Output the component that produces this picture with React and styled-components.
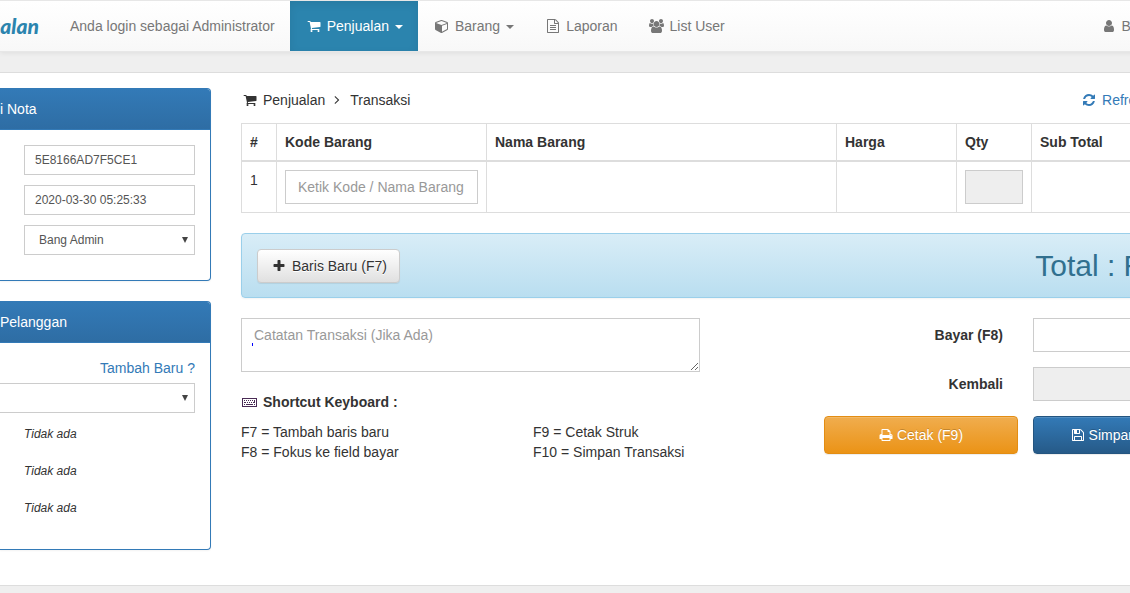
import styled, { createGlobalStyle, css } from "styled-components";

const icons = {
    cart: "M704 1536q0 52-38 90t-90 38-90-38-38-90 38-90 90-38 90 38 38 90zm896 0q0 52-38 90t-90 38-90-38-38-90 38-90 90-38 90 38 38 90zm128-1088v512q0 24-16.5 42.5t-40.5 21.5l-1044 122q13 60 13 70 0 16-24 64h920q26 0 45 19t19 45-19 45-45 19h-1024q-26 0-45-19t-19-45q0-11 8-31.5t16-36 21.5-40 15.5-29.5l-177-823h-204q-26 0-45-19t-19-45 19-45 45-19h256q16 0 28.5 6.5t19.5 15.5 13 24.5 8 26 5.5 29.5 4.5 26h1201q26 0 45 19t19 45z",
    cube: "M896 1629l640-349v-636l-640 233v752zm-64-865l698-254-698-254-698 254zm832-252v768q0 35-18 65t-49 47l-704 384q-28 16-61 16t-61-16l-704-384q-31-17-49-47t-18-65v-768q0-40 23-73t61-47l704-256q22-8 44-8t44 8l704 256q38 14 61 47t23 73z",
    file: "M1596 380q28 28 48 76t20 88v1152q0 40-28 68t-68 28h-1344q-40 0-68-28t-28-68v-1600q0-40 28-68t68-28h896q40 0 88 20t76 48zm-444-244v376h376q-10-29-22-41l-313-313q-12-12-41-22zm384 1528v-1024h-416q-40 0-68-28t-28-68v-416h-768v1536h1280zm-1024-864q0-14 9-23t23-9h704q14 0 23 9t9 23v64q0 14-9 23t-23 9h-704q-14 0-23-9t-9-23v-64zm736 224q14 0 23 9t9 23v64q0 14-9 23t-23 9h-704q-14 0-23-9t-9-23v-64q0-14 9-23t23-9h704zm0 256q14 0 23 9t9 23v64q0 14-9 23t-23 9h-704q-14 0-23-9t-9-23v-64q0-14 9-23t23-9h704z",
    users: "M593 896q-162 5-265 128h-134q-82 0-138-40.5t-56-118.5q0-353 124-353 6 0 43.5 21t97.5 42.5 119 21.5q67 0 133-23-5 37-5 66 0 139 81 256zm1071 637q0 120-73 189.5t-194 69.5h-874q-121 0-194-69.5t-73-189.5q0-53 3.5-103.5t14-109 26.5-108.5 43-97.5 62-81 85.5-53.5 111.5-20q10 0 43 21.5t73 48 107 48 135 21.5 135-21.5 107-48 73-48 43-21.5q61 0 111.5 20t85.5 53.5 62 81 43 97.5 26.5 108.5 14 109 3.5 103.5zm-1024-1277q0 106-75 181t-181 75-181-75-75-181 75-181 181-75 181 75 75 181zm704 384q0 159-112.5 271.5t-271.5 112.5-271.5-112.5-112.5-271.5 112.5-271.5 271.5-112.5 271.5 112.5 112.5 271.5zm576 225q0 78-56 118.5t-138 40.5h-134q-103-123-265-128 81-117 81-256 0-29-5-66 66 23 133 23 59 0 119-21.5t97.5-42.5 43.5-21q124 0 124 353zm-128-609q0 106-75 181t-181 75-181-75-75-181 75-181 181-75 181 75 75 181z",
    user: "M1536 1399q0 109-62.5 187t-150.5 78h-854q-88 0-150.5-78t-62.5-187q0-85 8.5-160.5t31.5-152 58.5-131 94-89 134.5-34.5q131 128 313 128t313-128q76 0 134.5 34.5t94 89 58.5 131 31.5 152 8.5 160.5zm-256-887q0 159-112.5 271.5t-271.5 112.5-271.5-112.5-112.5-271.5 112.5-271.5 271.5-112.5 271.5 112.5 112.5 271.5z",
    refresh: "M1639 1056q0 5-1 7-64 268-268 434.5t-478 166.5q-146 0-282.5-55t-243.5-157l-129 129q-19 19-45 19t-45-19-19-45v-448q0-26 19-45t45-19h448q26 0 45 19t19 45-19 45l-137 137q71 66 161 102t187 36q134 0 250-65t186-179q11-17 53-117 8-23 30-23h192q13 0 22.5 9.5t9.5 22.5zm25-800v448q0 26-19 45t-45 19h-448q-26 0-45-19t-19-45 19-45l138-138q-148-137-349-137-134 0-250 65t-186 179q-11 17-53 117-8 23-30 23h-199q-13 0-22.5-9.5t-9.5-22.5v-7q65-268 270-434.5t480-166.5q146 0 284 55.5t245 156.5l130-129q19-19 45-19t45 19 19 45z",
    angle: "M1171 896q0 13-10 23l-466 466q-10 10-23 10t-23-10l-50-50q-10-10-10-23t10-23l393-393-393-393q-10-10-10-23t10-23l50-50q10-10 23-10t23 10l466 466q10 10 10 23z",
    plus: "M1600 736v192q0 40-28 68t-68 28h-416v416q0 40-28 68t-68 28h-192q-40 0-68-28t-28-68v-416h-416q-40 0-68-28t-28-68v-192q0-40 28-68t68-28h416v-416q0-40 28-68t68-28h192q40 0 68 28t28 68v416h416q40 0 68 28t28 68z",
    print: "M448 1536h896v-256h-896v256zm0-640h896v-384h-160q-40 0-68-28t-28-68v-160h-640v640zm1152 64q0-26-19-45t-45-19-45 19-19 45 19 45 45 19 45-19 19-45zm128 0v416q0 13-9.5 22.5t-22.5 9.5h-224v160q0 40-28 68t-68 28h-960q-40 0-68-28t-28-68v-160h-224q-13 0-22.5-9.5t-9.5-22.5v-416q0-79 56.5-135.5t135.5-56.5h64v-544q0-40 28-68t68-28h672q40 0 88 20t76 48l152 152q28 28 48 76t20 88v256h64q79 0 135.5 56.5t56.5 135.5z",
    save: "M512 1536h768v-384h-768v384zm896 0h128v-896q0-14-10-38.5t-20-34.5l-281-281q-10-10-34-20t-39-10v416q0 40-28 68t-68 28h-576q-40 0-68-28t-28-68v-416h-128v1280h128v-416q0-40 28-68t68-28h832q40 0 68 28t28 68v416zm-384-928v-320q0-13-9.5-22.5t-22.5-9.5h-192q-13 0-22.5 9.5t-9.5 22.5v320q0 13 9.5 22.5t22.5 9.5h192q13 0 22.5-9.5t9.5-22.5zm640 32v928q0 40-28 68t-68 28h-1344q-40 0-68-28t-28-68v-1344q0-40 28-68t68-28h928q40 0 88 20t76 48l280 280q28 28 48 76t20 88z",
};

function Icon({name, fixed, width = 1792}){
    return(
        <IconBox $fixed={fixed}>
            <svg width={Math.round(width / 128)} height="14" viewBox={`0 0 ${width} 1792`} fill="currentColor" aria-hidden="true">
                <path d={icons[name]}/>
            </svg>
        </IconBox>
    )
}

function KeyboardIcon(){
    return(
        <IconBox $fixed>
            <svg width="18" height="14" viewBox="0 0 18 14" fill="#4a2b55" aria-hidden="true">
                <path fillRule="evenodd" d="M1 3h15v9H1zM2 4v7h13V4z"/>
                <path d="M3 5h1v1H3zM5 5h1v1H5zM7 5h1v1H7zM9 5h1v1H9zM11 5h1v1h-1zM13 5h1v3h-2V7h1zM3 7h2v1H3zM6 7h1v1H6zM8 7h1v1H8zM10 7h1v1h-1zM3 9h1v1H3zM5 9h7v1H5zM13 9h1v1h-1z"/>
            </svg>
        </IconBox>
    )
}

function Dropdown({label, children, padded, open}){
    return(
        <SelectWrap>
            <Select aria-label={label} $padded={padded} $open={open}>{children}</Select>
            <Arrow width="6" height="6" viewBox="0 0 6 6" aria-hidden="true"><path d="M0 0h6L3 6z" fill="#444"/></Arrow>
        </SelectWrap>
    )
}

function Header(){
    return(
        <Navbar>
            <Brand href="#">ualan</Brand>
            <NavText>Anda login sebagai Administrator</NavText>
            <NavLink href="#" $active><Icon name="cart" fixed/>Penjualan<Caret/></NavLink>
            <NavLink href="#"><Icon name="cube" width={1664} fixed/>Barang<Caret/></NavLink>
            <NavLink href="#"><Icon name="file" fixed/>Laporan</NavLink>
            <NavLink href="#"><Icon name="users" width={1920} fixed/>List User</NavLink>
            <NavLink href="#" $right><Icon name="user" fixed/>Bang Admin<Caret/></NavLink>
        </Navbar>
    )
}

function Sidebar(){
    return(
        <Side>
            <Panel>
                <PanelHeading>i Nota</PanelHeading>
                <NotaBody>
                    <SmallInput aria-label="No. Nota" defaultValue="5E8166AD7F5CE1"/>
                    <SmallInput aria-label="Tanggal" defaultValue="2020-03-30 05:25:33"/>
                    <Dropdown label="Kasir" padded><option>Bang Admin</option></Dropdown>
                </NotaBody>
            </Panel>
            <Panel>
                <PanelHeading>Pelanggan</PanelHeading>
                <CustomerBody>
                    <AddCustomer href="#">Tambah Baru ?</AddCustomer>
                    <Dropdown label="Pelanggan" open><option></option></Dropdown>
                    <CustomerInfo>
                        <i>Tidak ada</i>
                        <i>Tidak ada</i>
                        <i>Tidak ada</i>
                    </CustomerInfo>
                </CustomerBody>
            </Panel>
        </Side>
    )
}

function Items(){
    return(
        <Table>
            <colgroup>
                <col width="35"/>
                <col width="210"/>
                <col width="350"/>
                <col width="120"/>
                <col width="75"/>
                <col/>
            </colgroup>
            <thead>
                <tr>
                    <th>#</th>
                    <th>Kode Barang</th>
                    <th>Nama Barang</th>
                    <th>Harga</th>
                    <th>Qty</th>
                    <th>Sub Total</th>
                </tr>
            </thead>
            <tbody>
                <tr>
                    <td>1</td>
                    <td><Input aria-label="Kode Barang" placeholder="Ketik Kode / Nama Barang"/></td>
                    <td/>
                    <td/>
                    <td><Input aria-label="Qty" disabled/></td>
                    <td/>
                </tr>
            </tbody>
        </Table>
    )
}

export default function App(){
    return(
        <Page>
            <GlobalStyle/>
            <Wide>
                <Header/>
                <Content>
                    <Sidebar/>
                    <Main>
                        <TitleBar>
                            <span><Icon name="cart" fixed/>Penjualan</span>
                            <Separator><Icon name="angle"/></Separator>
                            <span>Transaksi</span>
                            <Refresh href="#"><Icon name="refresh" fixed/>Refresh Halaman</Refresh>
                        </TitleBar>
                        <Items/>
                        <TotalBar>
                            <Button><Icon name="plus" fixed/>Baris Baru (F7)</Button>
                            <h2>Total : Rp 0</h2>
                        </TotalBar>
                        <Bottom>
                            <div>
                                <NoteWrap>
                                    <Note aria-label="Catatan Transaksi" placeholder="Catatan Transaksi (Jika Ada)"/>
                                    <Mark/>
                                </NoteWrap>
                                <ShortcutTitle><KeyboardIcon/>Shortcut Keyboard :</ShortcutTitle>
                                <Shortcuts>
                                    <span>F7 = Tambah baris baru</span>
                                    <span>F9 = Cetak Struk</span>
                                    <span>F8 = Fokus ke field bayar</span>
                                    <span>F10 = Simpan Transaksi</span>
                                </Shortcuts>
                            </div>
                            <Payment>
                                <label htmlFor="bayar">Bayar (F8)</label>
                                <Input id="bayar"/>
                                <label htmlFor="kembali">Kembali</label>
                                <Input id="kembali" disabled/>
                                <Button $kind="warning"><Icon name="print"/>Cetak (F9)</Button>
                                <Button $kind="primary"><Icon name="save"/>Simpan (F10)</Button>
                            </Payment>
                        </Bottom>
                    </Main>
                </Content>
            </Wide>
        </Page>
    )
}

const GlobalStyle = createGlobalStyle`
    * { box-sizing: border-box; }
    body {
        margin: 0;
        background: #efefef;
        color: #333;
        font: 14px/20px "Liberation Sans", Arial, sans-serif;
    }
    a { text-decoration: none; }
    h2, p { margin: 0; }
    input, select, textarea, button { font-family: inherit; }
`;

const Page = styled.div`
    overflow: hidden;
    padding-bottom: 20px;
`;
// the layout runs on past the right edge of the window
const Wide = styled.div`
    margin-right: -96px;
`;

const IconBox = styled.span`
    display: inline-flex;
    justify-content: center;
    width: ${p => p.$fixed ? "18px" : "14px"};
    margin-right: 4px;
    vertical-align: -2px;
    svg { flex: none; }
`;
const Caret = styled.span`
    display: inline-block;
    margin-left: 6px;
    vertical-align: middle;
    border-top: 4px solid;
    border-left: 4px solid transparent;
    border-right: 4px solid transparent;
`;

const Navbar = styled.nav`
    display: flex;
    white-space: nowrap;
    position: relative;
    border: solid #e7e7e7;
    border-width: 1px 0;
    background: linear-gradient(#fff, #f8f8f8);
    box-shadow: 0 1px 5px rgba(0, 0, 0, .075);
`;
const Brand = styled.a`
    display: flex;
    justify-content: flex-end;
    width: 39px;
    margin-right: 16px;
    overflow: hidden;
    color: #2b84ae;
    font: italic 900 21px/50px Lato, sans-serif;
`;
const NavText = styled.p`
    padding: 15px;
    color: #777;
`;
const NavLink = styled.a`
    padding: 15px;
    color: #777;
    ${p => p.$right && css`margin-left: auto;`}
    ${p => p.$active && css`
        color: #fff;
        background: #2b84ae;
        box-shadow: inset 0 3px 9px rgba(0, 0, 0, .075);
    `}
`;

const Content = styled.div`
    display: flex;
    gap: 30px;
    margin-top: 20px;
    padding: 15px 15px 15px 0;
    border: solid #ddd;
    border-width: 1px 0;
    background: #fff;
`;
const Side = styled.aside`
    flex: none;
    width: 211px;
`;
const Main = styled.main`
    flex: 1;
    min-width: 0;
`;

const Panel = styled.section`
    margin-bottom: 20px;
    border: 1px solid #337ab7;
    border-left: 0;
    border-radius: 0 4px 4px 0;
    box-shadow: 0 1px 2px rgba(0, 0, 0, .05);
`;
const PanelHeading = styled.div`
    padding: 10px 0;
    border-bottom: 1px solid #337ab7;
    border-radius: 0 3px 0 0;
    background: linear-gradient(#337ab7, #2e6da4);
    color: #fff;
`;
const NotaBody = styled.div`
    display: grid;
    gap: 10px;
    padding: 15px 15px 25px 24px;
`;
const CustomerBody = styled.div`
    padding: 15px 15px 12px 0;
`;
const AddCustomer = styled.a`
    display: block;
    margin-bottom: 5px;
    color: #337ab7;
    text-align: right;
`;
const CustomerInfo = styled.div`
    display: grid;
    gap: 20px;
    padding: 13px 0 20px 24px;
    font-size: 12px;
    line-height: 17px;
`;

const field = css`
    display: block;
    width: 100%;
    border: 1px solid #ccc;
    border-radius: 0;
    outline: 0;
    background: #fff;
    color: #555;
`;
const SmallInput = styled.input`
    ${field}
    height: 30px;
    padding: 5px 10px;
    font-size: 12px;
`;
const Input = styled.input`
    ${field}
    height: 34px;
    padding: 6px 12px;
    font-size: 14px;
    &::placeholder { color: #999; }
    &:disabled { background: #eee; }
`;
const SelectWrap = styled.div`
    position: relative;
`;
const Select = styled.select`
    ${field}
    appearance: none;
    height: 30px;
    padding: 5px ${p => p.$padded ? "14px" : "10px"};
    font-size: 12px;
    ${p => p.$open && css`border-left: 0;`}
`;
const Arrow = styled.svg`
    position: absolute;
    top: 12px;
    right: 7px;
    pointer-events: none;
`;

const TitleBar = styled.div`
    display: flex;
    padding: 2px 0 13px;
    white-space: nowrap;
`;
const Separator = styled.span`
    width: 14px;
    margin: 0 6px 0 5px;
`;
const Refresh = styled.a`
    margin-left: auto;
    color: #337ab7;
`;

const Table = styled.table`
    width: 100%;
    margin-bottom: 20px;
    border-collapse: collapse;
    table-layout: fixed;
    th, td {
        padding: 8px;
        border: 1px solid #ddd;
        text-align: left;
        vertical-align: top;
    }
    th { border-bottom-width: 2px; }
`;

const TotalBar = styled.div`
    display: flex;
    justify-content: space-between;
    margin-bottom: 20px;
    padding: 15px 23px 14px 15px;
    border: 1px solid #9acfea;
    border-radius: 4px;
    background: linear-gradient(#d9edf7, #b9def0);
    box-shadow: 0 1px 2px rgba(0, 0, 0, .05);
    h2 {
        color: #31708f;
        font-size: 30px;
        font-weight: 400;
        line-height: 33px;
        white-space: nowrap;
    }
`;

const kinds = {
    default: css`
        height: 34px;
        padding: 0 12px;
        border-color: #ccc;
        background: linear-gradient(#fff, #e0e0e0);
        color: #333;
        text-shadow: 0 1px 0 #fff;
    `,
    warning: css`
        border-color: #e38d13;
        background: linear-gradient(#f0ad4e, #eb9316);
    `,
    primary: css`
        border-color: #245580;
        background: linear-gradient(#337ab7, #265a88);
    `,
};
const Button = styled.button`
    height: 38px;
    border: 1px solid;
    border-radius: 4px;
    box-shadow: inset 0 1px 0 rgba(255, 255, 255, .15), 0 1px 1px rgba(0, 0, 0, .075);
    color: #fff;
    font-size: 14px;
    line-height: 20px;
    white-space: nowrap;
    text-shadow: 0 -1px 0 rgba(0, 0, 0, .2);
    ${p => kinds[p.$kind || "default"]}
`;

const Bottom = styled.div`
    display: grid;
    grid-template-columns: 459px 387px;
    justify-content: space-between;
`;
const NoteWrap = styled.div`
    position: relative;
    margin-bottom: 20px;
`;
const Note = styled.textarea`
    ${field}
    height: 54px;
    padding: 6px 12px;
    font-size: 14px;
    line-height: 20px;
    resize: vertical;
    &::placeholder { color: #999; }
`;
const Mark = styled.span`
    position: absolute;
    left: 11px;
    top: 25px;
    width: 1px;
    height: 3px;
    background: #00f;
`;
const ShortcutTitle = styled.div`
    margin-bottom: 10px;
    font-weight: bold;
`;
const Shortcuts = styled.div`
    display: grid;
    grid-template-columns: 292px 1fr;
    white-space: nowrap;
`;
const Payment = styled.div`
    display: grid;
    grid-template-columns: 194px 1fr;
    gap: 15px;
    align-content: start;
    label {
        padding: 7px 15px 7px 0;
        font-weight: bold;
        text-align: right;
    }
`;
